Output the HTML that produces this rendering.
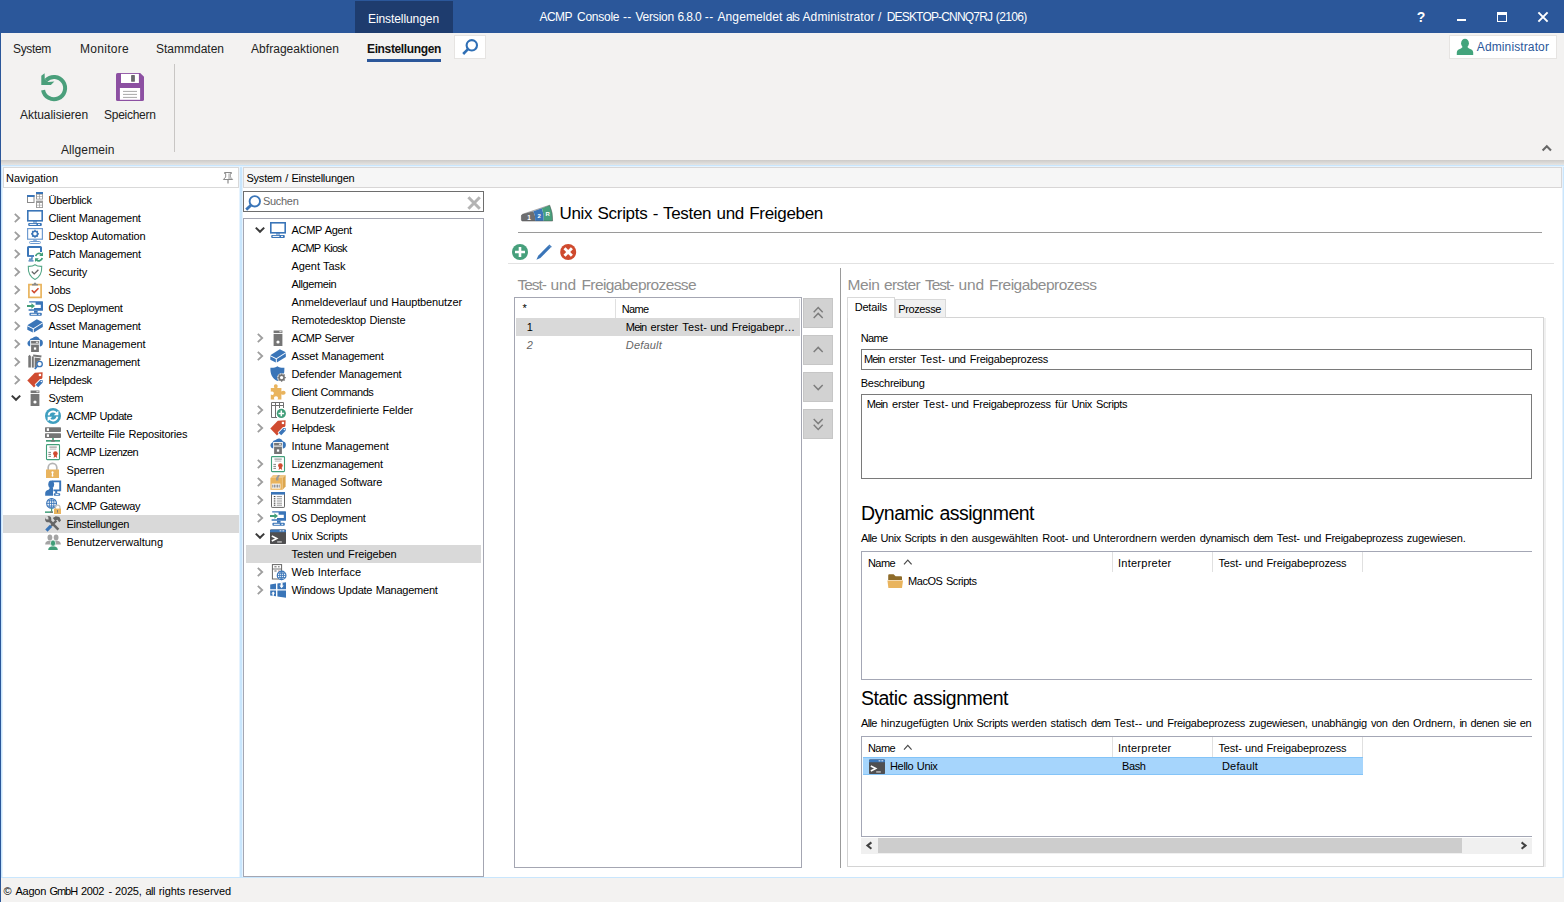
<!DOCTYPE html>
<html><head><meta charset="utf-8"><title>ACMP Console</title>
<style>
html,body{margin:0;padding:0;}
body{width:1564px;height:902px;position:relative;overflow:hidden;background:#fff;font-family:"Liberation Sans", sans-serif;}
.b{position:absolute;}
.t{position:absolute;white-space:pre;}
svg{position:absolute;overflow:visible;}
</style></head><body>
<div class="b" style="left:0px;top:0px;width:1564px;height:33px;background:#2b579a;"></div>
<div class="b" style="left:355px;top:1px;width:98px;height:32px;background:#1e3c6e;"></div>
<div class="b" style="left:0px;top:33px;width:1564px;height:127px;background:#f3f2f1;"></div>
<div class="b" style="left:0px;top:160px;width:1564px;height:5px;background:linear-gradient(#cdcbc9,#e6e5e3);"></div>
<div class="b" style="left:0px;top:165px;width:1564px;height:713px;background:#d4e8fb;"></div>
<div class="b" style="left:0px;top:878px;width:1564px;height:24px;background:#f3f2f1;"></div>
<div class="b" style="left:0px;top:33px;width:1px;height:869px;background:#2b579a;"></div>
<div class="b" style="left:3px;top:167px;width:236px;height:710px;background:#fff;"></div>
<div class="b" style="left:3px;top:167px;width:236px;height:21px;background:#fff;border:1px solid #d9d9d9;box-sizing:border-box;"></div>
<div class="b" style="left:243px;top:167px;width:1319px;height:710px;background:#fff;"></div>
<div class="b" style="left:243px;top:167px;width:1319px;height:21px;background:#f6f6f6;border:1px solid #d8d6d6;box-sizing:border-box;"></div>
<div class="b" style="left:1px;top:165px;width:1563px;height:1px;background:#c9e6fd;"></div>
<div class="b" style="left:1px;top:166px;width:1563px;height:1px;background:#e6f3fe;"></div>
<div class="b" style="left:239px;top:167px;width:1px;height:710px;background:#e6f3fe;"></div>
<div class="b" style="left:242px;top:167px;width:1px;height:710px;background:#e6f3fe;"></div>
<div class="b" style="left:240px;top:167px;width:2px;height:710px;background:#c9e6fd;"></div>
<div class="b" style="left:1562px;top:167px;width:1px;height:710px;background:#e6f1fc;"></div>
<div class="b" style="left:1563px;top:167px;width:1px;height:710px;background:#c9e6fd;"></div>
<div class="b" style="left:1px;top:166px;width:1px;height:711px;background:#c9e6fd;"></div>
<div class="b" style="left:2px;top:166px;width:1px;height:711px;background:#e6f3fe;"></div>
<div class="b" style="left:1px;top:877px;width:1563px;height:1px;background:#c9e6fd;"></div>
<div class="b" style="left:367px;top:59px;width:74px;height:3px;background:#2b579a;"></div>
<div class="b" style="left:454px;top:35px;width:32px;height:24px;background:#fff;border:1px solid #e6e4e2;box-sizing:border-box;"></div>
<div class="b" style="left:1449px;top:35px;width:108px;height:24px;background:#fff;border:1px solid #e6e4e2;box-sizing:border-box;"></div>
<div class="b" style="left:174px;top:64px;width:1px;height:88px;background:#c8c6c4;"></div>
<svg style="left:27px;top:192px" width="16" height="16" viewBox="0 0 16 16"><rect x="0.5" y="3.5" width="6.5" height="7" fill="#fff" stroke="#8a8a8a"/><rect x="0" y="3" width="7.5" height="2" fill="#3a75b8"/>
<rect x="9" y="0" width="7" height="7.5" fill="#9a9a9a"/><rect x="9" y="0" width="7" height="2" fill="#3a75b8"/>
<rect x="10" y="2.6" width="2.2" height="1.8" fill="#fff"/><rect x="12.9" y="2.6" width="2.2" height="1.8" fill="#fff"/><rect x="10" y="5" width="2.2" height="1.7" fill="#fff"/><rect x="12.9" y="5" width="2.2" height="1.7" fill="#fff"/>
<rect x="9" y="8.6" width="7" height="7.4" fill="#9a9a9a"/>
<rect x="10" y="11" width="2.2" height="1.8" fill="#fff"/><rect x="12.9" y="11" width="2.2" height="1.8" fill="#fff"/><rect x="10" y="13.4" width="2.2" height="1.7" fill="#fff"/><rect x="12.9" y="13.4" width="2.2" height="1.7" fill="#fff"/></svg>
<svg style="left:27px;top:210px" width="16" height="16" viewBox="0 0 16 16"><rect x="0.8" y="0.8" width="14.4" height="10" fill="#fff" stroke="#3a75b8" stroke-width="1.6"/>
<rect x="6" y="11.4" width="4" height="1.1" fill="#3a75b8"/>
<rect x="1.2" y="12.9" width="13.6" height="3" rx="1" fill="#3a75b8"/>
<rect x="2.6" y="13.9" width="6.8" height="1" fill="#fff"/><rect x="11" y="13.9" width="2" height="1" fill="#fff"/></svg>
<svg style="left:12.8px;top:213px" width="8" height="10" viewBox="0 0 8 10"><path d="M1.8 0.9 L6.2 5 L1.8 9.1" fill="none" stroke="#9e9e9e" stroke-width="1.8"/></svg>
<svg style="left:27px;top:228px" width="16" height="16" viewBox="0 0 16 16"><rect x="0.6" y="0.6" width="14.8" height="10.6" fill="#fff" stroke="#6f9bd0" stroke-width="1.2"/>
<circle cx="8" cy="5.8" r="2.6" fill="none" stroke="#3a75b8" stroke-width="1.6"/>
<g stroke="#3a75b8" stroke-width="1.3"><path d="M8 1.8v1.3M8 8.5v1.3M4 5.8h1.3M10.7 5.8H12M5.2 3l.9.9M9.9 7.7l.9.9M10.8 3l-.9.9M6.1 7.7l-.9.9"/></g>
<rect x="6.2" y="11.6" width="3.6" height="1.2" fill="#6f9bd0"/>
<rect x="2.6" y="13.5" width="10.8" height="2" rx="0.8" fill="#fff" stroke="#6f9bd0" stroke-width="1"/></svg>
<svg style="left:12.8px;top:231px" width="8" height="10" viewBox="0 0 8 10"><path d="M1.8 0.9 L6.2 5 L1.8 9.1" fill="none" stroke="#9e9e9e" stroke-width="1.8"/></svg>
<svg style="left:27px;top:246px" width="16" height="16" viewBox="0 0 16 16"><path d="M1 10V1.5Q1 1 1.5 1H13.5Q14 1 14 1.5V6" fill="none" stroke="#3a75b8" stroke-width="2"/>
<path d="M0.2 10H7" stroke="#3a75b8" stroke-width="1.8"/>
<path d="M5 10.5V13.2H2M1.5 14.8H6.5" fill="none" stroke="#3a75b8" stroke-width="1.3"/>
<path d="M8.8 10.2A3.3 3.3 0 0 1 14.6 8.6" fill="none" stroke="#419e79" stroke-width="1.7"/>
<path d="M16 6.2V10H12.2Z" fill="#419e79"/>
<path d="M15.2 12A3.3 3.3 0 0 1 9.4 13.6" fill="none" stroke="#419e79" stroke-width="1.7"/>
<path d="M8 16V12.2H11.8Z" fill="#419e79"/></svg>
<svg style="left:12.8px;top:249px" width="8" height="10" viewBox="0 0 8 10"><path d="M1.8 0.9 L6.2 5 L1.8 9.1" fill="none" stroke="#9e9e9e" stroke-width="1.8"/></svg>
<svg style="left:27px;top:264px" width="16" height="16" viewBox="0 0 16 16"><path d="M8 0.7C6 2.2 3.6 2.5 1.3 2.4C1 8 2.6 12.8 8 15.4C13.4 12.8 15 8 14.7 2.4C12.4 2.5 10 2.2 8 0.7Z" fill="#fff" stroke="#56a889" stroke-width="1.1"/>
<path d="M4.8 7.6L7.2 9.9L11.4 5.8" fill="none" stroke="#666" stroke-width="1.4"/></svg>
<svg style="left:12.8px;top:267px" width="8" height="10" viewBox="0 0 8 10"><path d="M1.8 0.9 L6.2 5 L1.8 9.1" fill="none" stroke="#9e9e9e" stroke-width="1.8"/></svg>
<svg style="left:27px;top:282px" width="16" height="16" viewBox="0 0 16 16"><rect x="1.9" y="2.6" width="12.2" height="12.8" fill="#fff" stroke="#e9b45e" stroke-width="1.7"/>
<path d="M5 3.5V1.9H6.4L8 0.2L9.6 1.9H11V3.5Z" fill="#8a8a8a"/>
<path d="M4.8 8.2L7.2 10.6L11.5 6.3" fill="none" stroke="#d04b30" stroke-width="1.6"/></svg>
<svg style="left:12.8px;top:285px" width="8" height="10" viewBox="0 0 8 10"><path d="M1.8 0.9 L6.2 5 L1.8 9.1" fill="none" stroke="#9e9e9e" stroke-width="1.8"/></svg>
<svg style="left:27px;top:300px" width="16" height="16" viewBox="0 0 16 16"><path d="M2.2 1.2H15.4Q16 1.2 16 1.8V10.2Q16 10.8 15.4 10.8H1.6V9.2H7V7.9H13.8V4.8H8.6V2.5H2.2Z" fill="#3a75b8"/>
<rect x="7" y="10.8" width="3.6" height="2" fill="#3a75b8"/>
<rect x="2.4" y="12.8" width="12.4" height="3" rx="1" fill="#3a75b8"/>
<rect x="3.8" y="13.8" width="6" height="1" fill="#fff"/><rect x="11.4" y="13.8" width="1.8" height="1" fill="#fff"/>
<path d="M0 5H4.4V3.2L8 6L4.4 8.8V7H0Z" fill="#419e79"/></svg>
<svg style="left:12.8px;top:303px" width="8" height="10" viewBox="0 0 8 10"><path d="M1.8 0.9 L6.2 5 L1.8 9.1" fill="none" stroke="#9e9e9e" stroke-width="1.8"/></svg>
<svg style="left:27px;top:318px" width="16" height="16" viewBox="0 0 16 16"><path d="M0.3 7.2L9.8 1.2L15.8 4.2L6.3 10.2Z" fill="#3a75b8"/>
<path d="M0.3 8.2L5.8 11V14.6L0.3 11.8Z" fill="#3a75b8"/>
<path d="M6.8 11L15.8 5.3V8.9L6.8 14.6Z" fill="#3a75b8"/></svg>
<svg style="left:12.8px;top:321px" width="8" height="10" viewBox="0 0 8 10"><path d="M1.8 0.9 L6.2 5 L1.8 9.1" fill="none" stroke="#9e9e9e" stroke-width="1.8"/></svg>
<svg style="left:27px;top:336px" width="16" height="16" viewBox="0 0 16 16"><path d="M3 10.4A3 3 0 0 1 2.4 4.6A3.4 3.4 0 0 1 5.6 2A4.2 4.2 0 0 1 12.8 3.2A3.7 3.7 0 0 1 13.2 10.4Z" fill="#3a75b8"/>
<rect x="3.2" y="4" width="9.6" height="7" fill="#fff"/>
<rect x="4.1" y="4.9" width="7.8" height="2.7" fill="#757575"/><rect x="8.9" y="5.7" width="2.2" height="1" fill="#fff"/>
<rect x="4.1" y="8.6" width="7.8" height="7.4" fill="#757575"/><rect x="6.9" y="11.4" width="2.3" height="2.3" fill="#fff"/></svg>
<svg style="left:12.8px;top:339px" width="8" height="10" viewBox="0 0 8 10"><path d="M1.8 0.9 L6.2 5 L1.8 9.1" fill="none" stroke="#9e9e9e" stroke-width="1.8"/></svg>
<svg style="left:27px;top:354px" width="16" height="16" viewBox="0 0 16 16"><path d="M1.3 2.2L2.6 0.8L3.9 2.2V13.6H1.3Z" fill="#757575"/>
<rect x="4.8" y="2.4" width="2" height="11.2" fill="#757575"/>
<path d="M6.2 0.6L14.6 1.6L14.2 3.4L6.2 2.4Z" fill="#757575"/>
<path d="M7.6 3.4L13.6 4.2V6L10.4 7.6L9.4 13.6H7.6Z" fill="#757575"/>
<circle cx="12.6" cy="10" r="2.7" fill="#fff" stroke="#3a75b8" stroke-width="1.3"/>
<path d="M10.6 12L7.8 15" stroke="#3a75b8" stroke-width="1.7"/></svg>
<svg style="left:12.8px;top:357px" width="8" height="10" viewBox="0 0 8 10"><path d="M1.8 0.9 L6.2 5 L1.8 9.1" fill="none" stroke="#9e9e9e" stroke-width="1.8"/></svg>
<svg style="left:27px;top:372px" width="16" height="16" viewBox="0 0 16 16"><path d="M0.3 8.6L7.8 0.8L15.6 0.2L15.4 6L7 15.6Z" fill="#d04b30"/>
<rect x="11.8" y="1.8" width="2.3" height="2.3" fill="#fff"/>
<path d="M7.6 12.4L13 7L16 7.2L16 11.4L11 16Z" fill="#fff"/>
<path d="M8.6 12.8L13.4 8L15.8 8.2L15.6 10.8L11.2 15.2Z" fill="#3a75b8"/>
<circle cx="14.3" cy="9.5" r="0.7" fill="#fff"/></svg>
<svg style="left:12.8px;top:375px" width="8" height="10" viewBox="0 0 8 10"><path d="M1.8 0.9 L6.2 5 L1.8 9.1" fill="none" stroke="#9e9e9e" stroke-width="1.8"/></svg>
<svg style="left:27px;top:390px" width="16" height="16" viewBox="0 0 16 16"><rect x="3.6" y="0.5" width="8.8" height="2.6" fill="#757575"/><rect x="9.4" y="1.3" width="2.2" height="0.9" fill="#fff"/>
<rect x="3.6" y="4" width="8.8" height="12" fill="#757575"/><circle cx="8" cy="12" r="1.6" fill="#fff"/></svg>
<svg style="left:11.2px;top:394.4px" width="10" height="8" viewBox="0 0 10 8"><path d="M0.8 1.6 L5 5.8 L9.2 1.6" fill="none" stroke="#3a3a3a" stroke-width="2"/></svg>
<svg style="left:45px;top:408px" width="16" height="16" viewBox="0 0 16 16"><circle cx="8" cy="8" r="8" fill="#3f9fc0"/>
<path d="M3.6 7.4A4.5 4.5 0 0 1 11.4 5" fill="none" stroke="#fff" stroke-width="1.8"/>
<path d="M13.4 2.6V7.2H8.8Z" fill="#fff"/>
<path d="M12.4 8.6A4.5 4.5 0 0 1 4.6 11" fill="none" stroke="#fff" stroke-width="1.8"/>
<path d="M2.6 13.4V8.8H7.2Z" fill="#fff"/></svg>
<svg style="left:45px;top:426px" width="16" height="16" viewBox="0 0 16 16"><rect x="0" y="1.2" width="16" height="4.8" rx="0.7" fill="#757575"/><rect x="1.8" y="2.3" width="2.2" height="2.6" fill="#fff"/>
<rect x="0" y="7.2" width="16" height="4.8" rx="0.7" fill="#757575"/><rect x="1.8" y="8.3" width="2.2" height="2.6" fill="#fff"/>
<rect x="7.2" y="12" width="1.6" height="2.2" fill="#419e79"/>
<rect x="1" y="14" width="14" height="1.7" fill="#419e79"/><rect x="6.2" y="14" width="3.6" height="1.7" fill="#757575"/></svg>
<svg style="left:45px;top:444px" width="16" height="16" viewBox="0 0 16 16"><rect x="1.5" y="0.6" width="13" height="15" rx="0.8" fill="#fff" stroke="#419e79" stroke-width="1.1"/>
<path d="M4.4 3.1H11.8" stroke="#666" stroke-width="0.8"/><path d="M4.8 5.1H11.4" stroke="#999" stroke-width="0.7"/>
<path d="M3.4 8.4H6M3.4 10.4H6M3.4 12.4H6" stroke="#777" stroke-width="0.9"/>
<circle cx="10.4" cy="9.6" r="2.3" fill="#d04b30"/>
<path d="M9.2 11L8.6 14L10.4 12.8L12.2 14L11.6 11Z" fill="#d04b30"/></svg>
<svg style="left:45px;top:462px" width="16" height="16" viewBox="0 0 16 16"><path d="M3.2 8V5.6A4.3 4.3 0 0 1 11.8 5.6V8" fill="none" stroke="#b4b4b4" stroke-width="1.7"/>
<rect x="1" y="7.5" width="13" height="8.5" fill="#e9b45e"/>
<circle cx="7.5" cy="10.4" r="1.1" fill="#fff"/><rect x="6.9" y="10.4" width="1.2" height="3.4" fill="#fff"/><circle cx="7.5" cy="13.8" r="0.9" fill="#fff"/></svg>
<svg style="left:45px;top:480px" width="16" height="16" viewBox="0 0 16 16"><path d="M7 1.4H15.2V10.4H8.4" fill="none" stroke="#3a75b8" stroke-width="1.9"/>
<rect x="10.2" y="11" width="2" height="2" fill="#3a75b8"/>
<rect x="8.8" y="13.2" width="6.4" height="2.5" rx="0.7" fill="#3a75b8"/><rect x="10.6" y="14" width="3" height="0.9" fill="#fff"/>
<ellipse cx="6.2" cy="4.3" rx="2.9" ry="3.9" fill="#3a75b8"/>
<path d="M0.2 15.7V13.2Q0.2 10.4 3.6 9.8L4.8 8H8V15.7Z" fill="#3a75b8"/></svg>
<svg style="left:45px;top:498px" width="16" height="16" viewBox="0 0 16 16"><circle cx="6.6" cy="5.4" r="4.9" fill="#fff" stroke="#3a75b8" stroke-width="1.1"/>
<path d="M6.6 0.5V10.3M1.7 5.4H11.5M2.6 2.8H10.6M2.6 8H10.6" stroke="#3a75b8" stroke-width="0.9"/>
<ellipse cx="6.6" cy="5.4" rx="2.3" ry="4.9" fill="none" stroke="#3a75b8" stroke-width="0.9"/>
<rect x="6" y="10.4" width="1.2" height="3" fill="#419e79"/>
<rect x="0" y="13.4" width="8" height="1.5" fill="#419e79"/><rect x="5.2" y="13.4" width="2.4" height="1.5" fill="#757575"/>
<path d="M10.4 11V9.4A2.3 2.3 0 0 1 15 9.4V11" fill="none" stroke="#c4c4c4" stroke-width="1.3"/>
<rect x="9" y="10.6" width="7" height="5.4" fill="#e9b45e"/><rect x="12.1" y="12" width="0.9" height="2.6" fill="#777"/></svg>
<div class="b" style="left:3px;top:515px;width:236px;height:18px;background:#d9d9d9;"></div>
<svg style="left:45px;top:516px" width="16" height="16" viewBox="0 0 16 16"><path d="M3 3L13.4 13.6" stroke="#666" stroke-width="2.5"/>
<circle cx="3.2" cy="3.2" r="3.1" fill="#666"/>
<path d="M-0.5 -0.5L3.2 0.6L3.6 3.4L0.8 3.2Z" fill="#d9d9d9"/>
<path d="M11.4 4.6L6 10" stroke="#666" stroke-width="2.3"/>
<path d="M7.8 2L10.8 0.2L14.4 1L16 4.4L14.2 6.2L12.4 3.8L9.8 4.4Z" fill="#666"/>
<path d="M6 9.8L1.4 14.6" stroke="#3a75b8" stroke-width="3.2"/></svg>
<svg style="left:45px;top:534px" width="16" height="16" viewBox="0 0 16 16"><ellipse cx="4.9" cy="3.5" rx="2.4" ry="3" fill="#a4a4a4"/>
<path d="M0.2 10.4Q0.2 7.6 3.4 6.8H6.4Q8 7.2 8 9V10.4Z" fill="#a4a4a4"/>
<ellipse cx="11.1" cy="3.5" rx="2.4" ry="3" fill="#a4a4a4"/>
<path d="M8 10.4V9Q8 7.2 9.6 6.8H12.6Q15.8 7.6 15.8 10.4Z" fill="#a4a4a4"/>
<ellipse cx="8" cy="9.2" rx="2.6" ry="3.2" fill="#419e79" stroke="#fff" stroke-width="0.7"/>
<path d="M3.2 16Q3.2 13.2 6.2 12.4H9.8Q12.8 13.2 12.8 16Z" fill="#419e79"/></svg>
<div class="b" style="left:243px;top:191px;width:241px;height:21px;background:#fff;border:1px solid #6e6e6e;box-sizing:border-box;"></div>
<div class="b" style="left:243px;top:218px;width:241px;height:659px;background:#fff;border:1px solid #a4a6b2;box-sizing:border-box;"></div>
<svg style="left:270px;top:222px" width="16" height="16" viewBox="0 0 16 16"><rect x="0.8" y="0.8" width="14.4" height="10" fill="#fff" stroke="#3a75b8" stroke-width="1.6"/>
<rect x="6" y="11.4" width="4" height="1.1" fill="#3a75b8"/>
<rect x="1.2" y="12.9" width="13.6" height="3" rx="1" fill="#3a75b8"/>
<rect x="2.6" y="13.9" width="6.8" height="1" fill="#fff"/><rect x="11" y="13.9" width="2" height="1" fill="#fff"/></svg>
<svg style="left:254.60000000000002px;top:226px" width="10" height="8" viewBox="0 0 10 8"><path d="M0.8 1.6 L5 5.8 L9.2 1.6" fill="none" stroke="#3a3a3a" stroke-width="2"/></svg>
<svg style="left:270px;top:330px" width="16" height="16" viewBox="0 0 16 16"><rect x="3.6" y="0.5" width="8.8" height="2.6" fill="#757575"/><rect x="9.4" y="1.3" width="2.2" height="0.9" fill="#fff"/>
<rect x="3.6" y="4" width="8.8" height="12" fill="#757575"/><circle cx="8" cy="12" r="1.6" fill="#fff"/></svg>
<svg style="left:256.4px;top:333px" width="8" height="10" viewBox="0 0 8 10"><path d="M1.8 0.9 L6.2 5 L1.8 9.1" fill="none" stroke="#9e9e9e" stroke-width="1.8"/></svg>
<svg style="left:270px;top:348px" width="16" height="16" viewBox="0 0 16 16"><path d="M0.3 7.2L9.8 1.2L15.8 4.2L6.3 10.2Z" fill="#3a75b8"/>
<path d="M0.3 8.2L5.8 11V14.6L0.3 11.8Z" fill="#3a75b8"/>
<path d="M6.8 11L15.8 5.3V8.9L6.8 14.6Z" fill="#3a75b8"/></svg>
<svg style="left:256.4px;top:351px" width="8" height="10" viewBox="0 0 8 10"><path d="M1.8 0.9 L6.2 5 L1.8 9.1" fill="none" stroke="#9e9e9e" stroke-width="1.8"/></svg>
<svg style="left:270px;top:366px" width="16" height="16" viewBox="0 0 16 16"><path d="M7.4 0.2C5.6 1.6 3 2 0.4 1.8C0.2 8 2 12.4 7.4 15C9 14.2 10.4 13.2 11.4 12L14.2 6.4Q14.4 4.2 14.4 1.8C11.8 2 9.2 1.6 7.4 0.2Z" fill="#3a75b8"/>
<circle cx="11.6" cy="11.6" r="4.4" fill="#fff"/>
<circle cx="11.6" cy="11.6" r="2.5" fill="none" stroke="#757575" stroke-width="1.7"/>
<g stroke="#757575" stroke-width="1.4"><path d="M11.6 7.4v1.4M11.6 14.4v1.4M7.4 11.6h1.4M14.4 11.6h1.4M8.6 8.6l1 1M13.6 13.6l1 1M14.6 8.6l-1 1M9.6 13.6l-1 1"/></g></svg>
<svg style="left:270px;top:384px" width="16" height="16" viewBox="0 0 16 16"><path d="M0.8 4H4.4C3.2 1.6 4.2 0.2 5.8 0.2C7.4 0.2 8.4 1.6 7.2 4H11.4V7.4C13.6 6.2 15.6 7 15.6 8.8C15.6 10.6 13.6 11.4 11.4 10.2V15.6H7.6C8.6 13.4 7.6 12.2 6 12.2C4.4 12.2 3.4 13.4 4.4 15.6H0.8V10.6C2.8 11.6 3.8 10.6 3.8 9.2C3.8 7.8 2.8 6.8 0.8 7.8Z" fill="#e9b45e"/></svg>
<svg style="left:270px;top:402px" width="16" height="16" viewBox="0 0 16 16"><path d="M1.5 0.5H13.5V6M1.5 0.5V15.5H7M1.5 3.5H13.5M5.5 0.5V15.5M9.5 0.5V6" fill="none" stroke="#707070" stroke-width="1"/>
<circle cx="11.3" cy="11.4" r="4.6" fill="#419e79"/>
<path d="M11.3 8.6V14.2M8.5 11.4H14.1" stroke="#fff" stroke-width="1.5"/></svg>
<svg style="left:256.4px;top:405px" width="8" height="10" viewBox="0 0 8 10"><path d="M1.8 0.9 L6.2 5 L1.8 9.1" fill="none" stroke="#9e9e9e" stroke-width="1.8"/></svg>
<svg style="left:270px;top:420px" width="16" height="16" viewBox="0 0 16 16"><path d="M0.3 8.6L7.8 0.8L15.6 0.2L15.4 6L7 15.6Z" fill="#d04b30"/>
<rect x="11.8" y="1.8" width="2.3" height="2.3" fill="#fff"/>
<path d="M7.6 12.4L13 7L16 7.2L16 11.4L11 16Z" fill="#fff"/>
<path d="M8.6 12.8L13.4 8L15.8 8.2L15.6 10.8L11.2 15.2Z" fill="#3a75b8"/>
<circle cx="14.3" cy="9.5" r="0.7" fill="#fff"/></svg>
<svg style="left:256.4px;top:423px" width="8" height="10" viewBox="0 0 8 10"><path d="M1.8 0.9 L6.2 5 L1.8 9.1" fill="none" stroke="#9e9e9e" stroke-width="1.8"/></svg>
<svg style="left:270px;top:438px" width="16" height="16" viewBox="0 0 16 16"><path d="M3 10.4A3 3 0 0 1 2.4 4.6A3.4 3.4 0 0 1 5.6 2A4.2 4.2 0 0 1 12.8 3.2A3.7 3.7 0 0 1 13.2 10.4Z" fill="#3a75b8"/>
<rect x="3.2" y="4" width="9.6" height="7" fill="#fff"/>
<rect x="4.1" y="4.9" width="7.8" height="2.7" fill="#757575"/><rect x="8.9" y="5.7" width="2.2" height="1" fill="#fff"/>
<rect x="4.1" y="8.6" width="7.8" height="7.4" fill="#757575"/><rect x="6.9" y="11.4" width="2.3" height="2.3" fill="#fff"/></svg>
<svg style="left:270px;top:456px" width="16" height="16" viewBox="0 0 16 16"><rect x="1.5" y="0.6" width="13" height="15" rx="0.8" fill="#fff" stroke="#419e79" stroke-width="1.1"/>
<path d="M4.4 3.1H11.8" stroke="#666" stroke-width="0.8"/><path d="M4.8 5.1H11.4" stroke="#999" stroke-width="0.7"/>
<path d="M3.4 8.4H6M3.4 10.4H6M3.4 12.4H6" stroke="#777" stroke-width="0.9"/>
<circle cx="10.4" cy="9.6" r="2.3" fill="#d04b30"/>
<path d="M9.2 11L8.6 14L10.4 12.8L12.2 14L11.6 11Z" fill="#d04b30"/></svg>
<svg style="left:256.4px;top:459px" width="8" height="10" viewBox="0 0 8 10"><path d="M1.8 0.9 L6.2 5 L1.8 9.1" fill="none" stroke="#9e9e9e" stroke-width="1.8"/></svg>
<svg style="left:270px;top:474px" width="16" height="16" viewBox="0 0 16 16"><path d="M0.4 4L3 1H15.6L12.6 4Z" fill="#f0c887"/>
<path d="M12.6 4L15.6 1V12.6L12.6 15.8Z" fill="#dca64e"/>
<rect x="0.4" y="4" width="12.2" height="11.8" fill="#e9b45e"/>
<path d="M6 4L8 1H10L8.4 4V6.4H6Z" fill="#9a9a9a"/>
<rect x="1.6" y="9.6" width="8.8" height="5" fill="#fff"/>
<path d="M2.8 10.6V13.6M4.4 10.6V13.6M6 10.6V13.6M7.6 10.6V13.6M9.2 10.6V13.6" stroke="#666" stroke-width="0.8"/></svg>
<svg style="left:256.4px;top:477px" width="8" height="10" viewBox="0 0 8 10"><path d="M1.8 0.9 L6.2 5 L1.8 9.1" fill="none" stroke="#9e9e9e" stroke-width="1.8"/></svg>
<svg style="left:270px;top:492px" width="16" height="16" viewBox="0 0 16 16"><rect x="1.5" y="0.6" width="13" height="14.8" rx="0.6" fill="#fff" stroke="#666" stroke-width="1"/>
<rect x="1" y="0" width="14" height="2.6" fill="#3a75b8"/>
<path d="M3.8 4.6H5.4M3.8 6.8H5.4M3.8 9H5.4M3.8 11.2H5.4M3.8 13.2H5.4" stroke="#333" stroke-width="1"/>
<path d="M6.8 4.6H12M6.8 6.8H12M6.8 9H12M6.8 11.2H12M6.8 13.2H12" stroke="#888" stroke-width="0.9"/></svg>
<svg style="left:256.4px;top:495px" width="8" height="10" viewBox="0 0 8 10"><path d="M1.8 0.9 L6.2 5 L1.8 9.1" fill="none" stroke="#9e9e9e" stroke-width="1.8"/></svg>
<svg style="left:270px;top:510px" width="16" height="16" viewBox="0 0 16 16"><path d="M2.2 1.2H15.4Q16 1.2 16 1.8V10.2Q16 10.8 15.4 10.8H1.6V9.2H7V7.9H13.8V4.8H8.6V2.5H2.2Z" fill="#3a75b8"/>
<rect x="7" y="10.8" width="3.6" height="2" fill="#3a75b8"/>
<rect x="2.4" y="12.8" width="12.4" height="3" rx="1" fill="#3a75b8"/>
<rect x="3.8" y="13.8" width="6" height="1" fill="#fff"/><rect x="11.4" y="13.8" width="1.8" height="1" fill="#fff"/>
<path d="M0 5H4.4V3.2L8 6L4.4 8.8V7H0Z" fill="#419e79"/></svg>
<svg style="left:256.4px;top:513px" width="8" height="10" viewBox="0 0 8 10"><path d="M1.8 0.9 L6.2 5 L1.8 9.1" fill="none" stroke="#9e9e9e" stroke-width="1.8"/></svg>
<svg style="left:270px;top:528px" width="16" height="16" viewBox="0 0 16 16"><rect x="0" y="1.4" width="16" height="14.6" rx="0.7" fill="#4f4f51"/>
<path d="M0 2.9Q0 1.4 1.5 1.4H14.5Q16 1.4 16 2.9V4.2H0Z" fill="#3a75b8"/>
<rect x="9.6" y="2.4" width="1.8" height="0.9" fill="#fff"/><rect x="12.4" y="2.4" width="1.8" height="0.9" fill="#fff"/>
<path d="M1.8 8L6.8 10.5L1.8 13" fill="none" stroke="#fff" stroke-width="1.5"/>
<rect x="7.2" y="13.4" width="4.6" height="1.1" fill="#e0e0e0"/></svg>
<svg style="left:254.60000000000002px;top:532px" width="10" height="8" viewBox="0 0 10 8"><path d="M0.8 1.6 L5 5.8 L9.2 1.6" fill="none" stroke="#3a3a3a" stroke-width="2"/></svg>
<div class="b" style="left:246px;top:545px;width:235px;height:18px;background:#d9d9d9;"></div>
<svg style="left:270px;top:564px" width="16" height="16" viewBox="0 0 16 16"><rect x="2.4" y="0.6" width="9.2" height="14.4" fill="#fff" stroke="#666" stroke-width="1"/>
<path d="M2.4 5H11.6" stroke="#666" stroke-width="0.9"/>
<path d="M4.4 2.8H6.6M8 2.8H9.6M4.4 7H6.6" stroke="#555" stroke-width="0.9"/>
<rect x="8.2" y="6.6" width="1.2" height="0.8" fill="#d04b30"/>
<circle cx="11.6" cy="11.4" r="4.3" fill="#fff" stroke="#3a75b8" stroke-width="1.2"/>
<path d="M11.6 7.2V15.6M7.4 11.4H15.8M8.2 9.2H15M8.2 13.6H15" stroke="#3a75b8" stroke-width="0.9"/>
<ellipse cx="11.6" cy="11.4" rx="2" ry="4.2" fill="none" stroke="#3a75b8" stroke-width="0.9"/></svg>
<svg style="left:256.4px;top:567px" width="8" height="10" viewBox="0 0 8 10"><path d="M1.8 0.9 L6.2 5 L1.8 9.1" fill="none" stroke="#9e9e9e" stroke-width="1.8"/></svg>
<svg style="left:270px;top:582px" width="16" height="16" viewBox="0 0 16 16"><path d="M0.2 2.4L6 1.6V7.2H0.2Z" fill="#3a75b8"/>
<path d="M7.4 1.4L16 0.2V7.2H7.4Z" fill="#3a75b8"/>
<path d="M0.2 8.6H6V14.2L0.2 13.4Z" fill="#3a75b8"/>
<path d="M7.4 8.6H16V15.8L7.4 14.4Z" fill="#3a75b8"/>
<path d="M10.6 1V3.6H9.4L11.6 6.2L13.8 3.6H12.6V0.8Z" fill="#fff"/>
<path d="M3.2 9.4L1.2 11.6H2.4V13.8H4V11.6H5.2Z" fill="#fff"/></svg>
<svg style="left:256.4px;top:585px" width="8" height="10" viewBox="0 0 8 10"><path d="M1.8 0.9 L6.2 5 L1.8 9.1" fill="none" stroke="#9e9e9e" stroke-width="1.8"/></svg>
<div class="b" style="left:518px;top:232px;width:1024px;height:1px;background:#9a9a9a;"></div>
<div class="b" style="left:508px;top:263px;width:1046px;height:1px;background:#e2e2e2;"></div>
<div class="b" style="left:514px;top:297px;width:288px;height:571px;background:#fff;border:1px solid #a4a6b2;box-sizing:border-box;"></div>
<div class="b" style="left:615px;top:299px;width:1px;height:19px;background:#e0e0e0;"></div>
<div class="b" style="left:799px;top:299px;width:1px;height:19px;background:#e0e0e0;"></div>
<div class="b" style="left:516px;top:318px;width:284px;height:18px;background:#d9d9d9;"></div>
<div class="b" style="left:803px;top:298px;width:30px;height:30px;background:#d2d2d2;border:1px solid #c6c6c6;box-sizing:border-box;"></div>
<div class="b" style="left:803px;top:335px;width:30px;height:30px;background:#d2d2d2;border:1px solid #c6c6c6;box-sizing:border-box;"></div>
<div class="b" style="left:803px;top:372px;width:30px;height:30px;background:#d2d2d2;border:1px solid #c6c6c6;box-sizing:border-box;"></div>
<div class="b" style="left:803px;top:409px;width:30px;height:30px;background:#d2d2d2;border:1px solid #c6c6c6;box-sizing:border-box;"></div>
<div class="b" style="left:840px;top:268px;width:1px;height:600px;background:#9a9a9a;"></div>
<div class="b" style="left:847px;top:317px;width:697px;height:550px;background:#fff;border:1px solid #d4d4d4;box-sizing:border-box;"></div>
<div class="b" style="left:1544px;top:318px;width:2px;height:549px;background:#f0f0f0;"></div>
<div class="b" style="left:895px;top:299px;width:51px;height:19px;background:#f0f0f0;border:1px solid #d9d9d9;box-sizing:border-box;"></div>
<div class="b" style="left:847px;top:297px;width:48px;height:21px;background:#fff;border:1px solid #d9d9d9;box-sizing:border-box;border-bottom:none;"></div>
<div class="b" style="left:861px;top:349px;width:671px;height:21px;background:#fff;border:1px solid #7a7a7a;box-sizing:border-box;"></div>
<div class="b" style="left:861px;top:394px;width:671px;height:85px;background:#fff;border:1px solid #7a7a7a;box-sizing:border-box;"></div>
<div class="b" style="left:861px;top:551px;width:671px;height:129px;background:#fff;border:1px solid #a4a7b5;border-right:none;box-sizing:border-box;"></div>
<div class="b" style="left:1112px;top:552px;width:1px;height:20px;background:#e0e0e0;"></div>
<div class="b" style="left:1212px;top:552px;width:1px;height:20px;background:#e0e0e0;"></div>
<div class="b" style="left:1362px;top:552px;width:1px;height:20px;background:#e0e0e0;"></div>
<div class="b" style="left:861px;top:736px;width:671px;height:101px;background:#fff;border:1px solid #a4a7b5;border-right:none;box-sizing:border-box;"></div>
<div class="b" style="left:1112px;top:737px;width:1px;height:20px;background:#e0e0e0;"></div>
<div class="b" style="left:1212px;top:737px;width:1px;height:20px;background:#e0e0e0;"></div>
<div class="b" style="left:1362px;top:737px;width:1px;height:20px;background:#e0e0e0;"></div>
<div class="b" style="left:863px;top:757px;width:500px;height:18px;background:#a6d5fc;border-top:1px solid #84c4f8;border-bottom:1px solid #84c4f8;box-sizing:border-box;"></div>
<div class="b" style="left:861px;top:838px;width:671px;height:16px;background:#f0f0f0;"></div>
<div class="b" style="left:878px;top:838px;width:584px;height:15px;background:#cdcdcd;"></div>
<svg style="left:40.5px;top:72.65px" width="28" height="29" viewBox="0 0 28 29"><path d="M5.02 7.39A11.1 11.1 0 1 1 2.07 17.03" fill="none" stroke="#4a9f7b" stroke-width="4"/><path d="M0.3 2.7L3.6 0.2L3.8 6.2L7.2 9L13.4 8.6L9.9 12.1H0.3Z" fill="#4a9f7b"/></svg>
<svg style="left:116px;top:73px" width="28" height="28" viewBox="0 0 28 28"><path d="M1.6 0H24.2L28 3.8V26.4Q28 28 26.4 28H1.6Q0 28 0 26.4V1.6Q0 0 1.6 0Z" fill="#8c50a2"/><rect x="5" y="0.9" width="17.9" height="9.1" fill="#fff"/><rect x="15.1" y="2" width="3.8" height="6.7" rx="0.4" fill="#6a6a6e"/><rect x="3.9" y="15" width="20.2" height="11.8" fill="#fff"/><path d="M7 18.4H21M7 21.4H21M7 24.4H21" stroke="#a8a8a8" stroke-width="1"/></svg>
<svg style="left:455px;top:36px" width="30" height="22" viewBox="455 36 30 22"><circle cx="471.8" cy="45.3" r="5.2" fill="none" stroke="#2f6fb5" stroke-width="2.1"/><path d="M468 49.2L463.2 54" stroke="#2f6fb5" stroke-width="2.6"/></svg>
<svg style="left:244px;top:192px" width="20" height="19" viewBox="244 192 20 19"><circle cx="254.8" cy="201.3" r="5.2" fill="none" stroke="#3a75b8" stroke-width="1.9"/><path d="M251.2 205L246.2 209.6" stroke="#3a75b8" stroke-width="2.8"/></svg>
<svg style="left:466px;top:195px" width="16" height="16" viewBox="466 195 16 16"><path d="M468.4 197.2L479.8 208.8M479.8 197.2L468.4 208.8" stroke="#b4b4b4" stroke-width="3"/></svg>
<svg style="left:222px;top:171px" width="12" height="14" viewBox="222 171 12 14"><path d="M224.5 172.5H231.5V173.5H230.3V177L232.6 179.5H223.4L225.7 177V173.5H224.5Z" fill="#fff" stroke="#8a8a8a" stroke-width="1"/><path d="M228.2 173.5H230.3V177L232.2 179H228.2Z" fill="#c8c8c8"/><path d="M228 179.5V183.6" stroke="#8a8a8a" stroke-width="1.2"/></svg>
<div class="b" style="left:1457px;top:19px;width:9px;height:2px;background:#fff;"></div>
<div class="b" style="left:1497px;top:12px;width:10px;height:10px;border:1px solid #fff;box-sizing:border-box;border-top-width:3px;"></div>
<svg style="left:1537px;top:11px" width="12" height="12" viewBox="0 0 12 12"><path d="M1.4 1.4L10.6 10.6M10.6 1.4L1.4 10.6" stroke="#fff" stroke-width="2"/></svg>
<svg style="left:1456px;top:38px" width="18" height="18" viewBox="1456 38 18 18"><ellipse cx="1465" cy="43.2" rx="3.9" ry="4.5" fill="#43a47c"/><path d="M1456.8 55V52.4Q1456.8 49.4 1461 48.4L1462.6 47H1467.4L1469 48.4Q1473.2 49.4 1473.2 52.4V55Z" fill="#43a47c"/></svg>
<svg style="left:1541px;top:143px" width="12" height="10" viewBox="0 0 12 10"><path d="M1.6 7.4L5.8 3.2L10 7.4" fill="none" stroke="#686868" stroke-width="2.1"/></svg>
<svg style="left:521px;top:205px" width="32" height="17" viewBox="0 0 32 17"><path d="M0.4 11Q0.4 9.7 1.6 9.3L12.4 6.2Q14.6 10.6 14.2 16H1.6Q0.4 16 0.4 14.8Z" fill="#6d6e70"/><path d="M12.4 6.2L20.9 3.2Q23.4 9.4 22.7 16H14.2Q14.6 10.6 12.4 6.2Z" fill="#3a75b8"/><path d="M20.9 3.2L28.7 0.2Q32 7.6 31.6 16H22.7Q23.4 9.4 20.9 3.2Z" fill="#47a07c"/><path d="M0.4 11Q0.4 9.7 1.6 9.3L28.7 0.2Q32 7.6 31.6 16H1.6Q0.4 16 0.4 14.8Z" fill="none" stroke="#4a4a4a" stroke-width="0.5"/><text x="6.2" y="14.6" font-family="Liberation Sans" font-size="6.5" font-weight="bold" fill="#fff">1</text><text x="16.4" y="13.2" font-family="Liberation Sans" font-size="6" font-weight="bold" fill="#fff">2</text><text x="24.6" y="11.2" font-family="Liberation Sans" font-size="6" font-weight="bold" fill="#fff">R</text></svg>
<svg style="left:512px;top:244px" width="16" height="16" viewBox="0 0 16 16"><circle cx="8" cy="8" r="8" fill="#47a07c"/><path d="M8 3V13M3 8H13" stroke="#fff" stroke-width="2.6"/></svg>
<svg style="left:536px;top:244px" width="17" height="16" viewBox="0 0 17 16"><path d="M0.4 15.8L2.2 11.8L12.6 1.2L14.8 3.4L4.4 14Z" fill="#3a75b8"/><path d="M13.4 0.4L15.8 2.8L15 3.6L12.6 1.2Z" fill="#3a75b8"/></svg>
<svg style="left:560px;top:244px" width="16.4" height="16" viewBox="0 0 16 16"><circle cx="8" cy="8" r="8" fill="#cf4a2e"/><path d="M4.3 4.3L11.7 11.7M11.7 4.3L4.3 11.7" stroke="#fff" stroke-width="2.9"/></svg>
<svg style="left:0;top:0" width="1564" height="902"><path d="M813.7 312.20000000000005L818.2 307.6L822.7 312.20000000000005M813.7 318.0L818.2 313.4L822.7 318.0" fill="none" stroke="#7d7d7d" stroke-width="1.45"/></svg>
<svg style="left:0;top:0" width="1564" height="902"><path d="M813.7 352.0L818.2 347.4L822.7 352.0" fill="none" stroke="#7d7d7d" stroke-width="1.45"/></svg>
<svg style="left:0;top:0" width="1564" height="902"><path d="M813.7 385.0L818.2 389.6L822.7 385.0" fill="none" stroke="#7d7d7d" stroke-width="1.45"/></svg>
<svg style="left:0;top:0" width="1564" height="902"><path d="M813.7 419.0L818.2 423.6L822.7 419.0M813.7 424.79999999999995L818.2 429.4L822.7 424.79999999999995" fill="none" stroke="#7d7d7d" stroke-width="1.45"/></svg>
<svg style="left:0;top:0" width="1564" height="902"><path d="M904 564.4000000000001L907.8 560.2L911.6 564.4000000000001" fill="none" stroke="#4a4a4a" stroke-width="1.2"/></svg>
<svg style="left:0;top:0" width="1564" height="902"><path d="M904 749.6L907.8 745.4L911.6 749.6" fill="none" stroke="#4a4a4a" stroke-width="1.2"/></svg>
<svg style="left:887px;top:574px" width="17" height="15" viewBox="887 574 17 15"><path d="M888.2 575.4Q888.2 574.3 889.2 574.3H893.6L895.6 576.2H901Q902 576.2 902 577.2V580H888.2Z" fill="#8f6c2a"/><path d="M887.4 580.6H903L902 588H888.4Z" fill="#e9b45e"/></svg>
<svg style="left:869px;top:758px" width="16" height="16" viewBox="0 0 16 16"><rect x="0" y="1.4" width="16" height="14.6" rx="0.7" fill="#4f4f51"/>
<path d="M0 2.9Q0 1.4 1.5 1.4H14.5Q16 1.4 16 2.9V4.2H0Z" fill="#3a75b8"/>
<rect x="9.6" y="2.4" width="1.8" height="0.9" fill="#fff"/><rect x="12.4" y="2.4" width="1.8" height="0.9" fill="#fff"/>
<path d="M1.8 8L6.8 10.5L1.8 13" fill="none" stroke="#fff" stroke-width="1.5"/>
<rect x="7.2" y="13.4" width="4.6" height="1.1" fill="#e0e0e0"/></svg>
<svg style="left:0;top:0" width="1564" height="902"><path d="M871.4 842.4L867.4 845.6L871.4 848.8" fill="none" stroke="#404040" stroke-width="2"/><path d="M1521.6 842.4L1525.6 845.6L1521.6 848.8" fill="none" stroke="#404040" stroke-width="2"/></svg>
<span class="t" style="left:368px;top:12px;font-size:12px;line-height:14px;letter-spacing:-0.082px;word-spacing:0.082px;color:#fff;">Einstellungen</span>
<span class="t" style="left:539.5px;top:10px;font-size:12px;line-height:14px;letter-spacing:-0.543px;word-spacing:0.543px;color:#fff;">ACMP</span>
<span class="t" style="left:577px;top:10px;font-size:12px;line-height:14px;letter-spacing:-0.247px;word-spacing:0.247px;color:#fff;">Console</span>
<span class="t" style="left:623px;top:10px;font-size:12px;line-height:14px;letter-spacing:0.250px;word-spacing:-0.250px;color:#fff;">--</span>
<span class="t" style="left:635.5px;top:10px;font-size:12px;line-height:14px;letter-spacing:-0.219px;word-spacing:0.219px;color:#fff;">Version</span>
<span class="t" style="left:677.5px;top:10px;font-size:12px;line-height:14px;letter-spacing:-0.601px;word-spacing:0.601px;color:#fff;">6.8.0</span>
<span class="t" style="left:704.8px;top:10px;font-size:12px;line-height:14px;letter-spacing:0.350px;word-spacing:-0.350px;color:#fff;">--</span>
<span class="t" style="left:717.5px;top:10px;font-size:12px;line-height:14px;letter-spacing:0.095px;word-spacing:-0.095px;color:#fff;">Angemeldet</span>
<span class="t" style="left:786px;top:10px;font-size:12px;line-height:14px;letter-spacing:-0.781px;word-spacing:0.781px;color:#fff;">als</span>
<span class="t" style="left:802.5px;top:10px;font-size:12px;line-height:14px;letter-spacing:0.109px;word-spacing:-0.109px;color:#fff;">Administrator</span>
<span class="t" style="left:878.1px;top:10px;font-size:12px;line-height:14px;letter-spacing:0.256px;word-spacing:-0.256px;color:#fff;">/</span>
<span class="t" style="left:886.7px;top:10px;font-size:12px;line-height:14px;letter-spacing:-0.820px;word-spacing:0.820px;color:#fff;">DESKTOP-CNNQ7RJ</span>
<span class="t" style="left:995.8px;top:10px;font-size:12px;line-height:14px;letter-spacing:-0.631px;word-spacing:0.631px;color:#fff;">(2106)</span>
<span class="t" style="left:13px;top:42px;font-size:12px;line-height:14px;letter-spacing:-0.336px;word-spacing:0.336px;color:#222;">System</span>
<span class="t" style="left:80px;top:42px;font-size:12px;line-height:14px;letter-spacing:0.289px;word-spacing:-0.289px;color:#222;">Monitore</span>
<span class="t" style="left:156px;top:42px;font-size:12px;line-height:14px;letter-spacing:-0.005px;word-spacing:0.005px;color:#222;">Stammdaten</span>
<span class="t" style="left:251px;top:42px;font-size:12px;line-height:14px;letter-spacing:0.040px;word-spacing:-0.040px;color:#222;">Abfrageaktionen</span>
<span class="t" style="left:367px;top:42px;font-size:12px;line-height:14px;letter-spacing:-0.361px;word-spacing:0.361px;color:#111;font-weight:bold;">Einstellungen</span>
<span class="t" style="left:1476.8px;top:40px;font-size:12px;line-height:14px;letter-spacing:0.116px;word-spacing:-0.116px;color:#2b579a;">Administrator</span>
<span class="t" style="left:20px;top:108px;font-size:12px;line-height:14px;letter-spacing:-0.054px;word-spacing:0.054px;color:#222;">Aktualisieren</span>
<span class="t" style="left:104px;top:108px;font-size:12px;line-height:14px;letter-spacing:-0.272px;word-spacing:0.272px;color:#222;">Speichern</span>
<span class="t" style="left:61px;top:143px;font-size:12px;line-height:14px;letter-spacing:0.089px;word-spacing:-0.089px;color:#222;">Allgemein</span>
<span class="t" style="left:6px;top:172px;font-size:11px;line-height:12px;letter-spacing:0.002px;word-spacing:0.383px;color:#000;">Navigation</span>
<span class="t" style="left:246.5px;top:172px;font-size:11px;line-height:12px;letter-spacing:-0.233px;word-spacing:0.618px;color:#000;">System / Einstellungen</span>
<span class="t" style="left:3.5px;top:885px;font-size:11px;line-height:12px;letter-spacing:0.891px;word-spacing:-0.506px;color:#000;">©</span>
<span class="t" style="left:15.5px;top:885px;font-size:11px;line-height:12px;letter-spacing:-0.263px;word-spacing:0.647px;color:#000;">Aagon</span>
<span class="t" style="left:49.5px;top:885px;font-size:11px;line-height:12px;letter-spacing:-1.070px;word-spacing:1.455px;color:#000;">GmbH</span>
<span class="t" style="left:81px;top:885px;font-size:11px;line-height:12px;letter-spacing:-0.371px;word-spacing:0.756px;color:#000;">2002</span>
<span class="t" style="left:108.5px;top:885px;font-size:11px;line-height:12px;letter-spacing:0.328px;word-spacing:0.057px;color:#000;">-</span>
<span class="t" style="left:115px;top:885px;font-size:11px;line-height:12px;letter-spacing:-0.166px;word-spacing:0.551px;color:#000;">2025,</span>
<span class="t" style="left:145.5px;top:885px;font-size:11px;line-height:12px;letter-spacing:-0.505px;word-spacing:0.890px;color:#000;">all</span>
<span class="t" style="left:158.7px;top:885px;font-size:11px;line-height:12px;letter-spacing:-0.051px;word-spacing:0.436px;color:#000;">rights</span>
<span class="t" style="left:188.6px;top:885px;font-size:11px;line-height:12px;letter-spacing:-0.025px;word-spacing:0.410px;color:#000;">reserved</span>
<span class="t" style="left:48.5px;top:194px;font-size:11px;line-height:12px;letter-spacing:-0.284px;word-spacing:0.669px;color:#000;">Überblick</span>
<span class="t" style="left:48.5px;top:212px;font-size:11px;line-height:12px;letter-spacing:-0.223px;word-spacing:0.608px;color:#000;">Client Management</span>
<span class="t" style="left:48.5px;top:230px;font-size:11px;line-height:12px;letter-spacing:-0.108px;word-spacing:0.493px;color:#000;">Desktop Automation</span>
<span class="t" style="left:48.5px;top:248px;font-size:11px;line-height:12px;letter-spacing:-0.238px;word-spacing:0.623px;color:#000;">Patch Management</span>
<span class="t" style="left:48.5px;top:266px;font-size:11px;line-height:12px;letter-spacing:-0.156px;word-spacing:0.541px;color:#000;">Security</span>
<span class="t" style="left:48.5px;top:284px;font-size:11px;line-height:12px;letter-spacing:-0.363px;word-spacing:0.748px;color:#000;">Jobs</span>
<span class="t" style="left:48.5px;top:302px;font-size:11px;line-height:12px;letter-spacing:-0.345px;word-spacing:0.730px;color:#000;">OS Deployment</span>
<span class="t" style="left:48.5px;top:320px;font-size:11px;line-height:12px;letter-spacing:-0.198px;word-spacing:0.583px;color:#000;">Asset Management</span>
<span class="t" style="left:48.5px;top:338px;font-size:11px;line-height:12px;letter-spacing:-0.078px;word-spacing:0.463px;color:#000;">Intune Management</span>
<span class="t" style="left:48.5px;top:356px;font-size:11px;line-height:12px;letter-spacing:-0.301px;word-spacing:0.686px;color:#000;">Lizenzmanagement</span>
<span class="t" style="left:48.5px;top:374px;font-size:11px;line-height:12px;letter-spacing:-0.320px;word-spacing:0.705px;color:#000;">Helpdesk</span>
<span class="t" style="left:48.5px;top:392px;font-size:11px;line-height:12px;letter-spacing:-0.348px;word-spacing:0.733px;color:#000;">System</span>
<span class="t" style="left:66.5px;top:410px;font-size:11px;line-height:12px;letter-spacing:-0.499px;word-spacing:0.884px;color:#000;">ACMP Update</span>
<span class="t" style="left:66.5px;top:428px;font-size:11px;line-height:12px;letter-spacing:-0.188px;word-spacing:0.573px;color:#000;">Verteilte File Repositories</span>
<span class="t" style="left:66.5px;top:446px;font-size:11px;line-height:12px;letter-spacing:-0.621px;word-spacing:1.006px;color:#000;">ACMP Lizenzen</span>
<span class="t" style="left:66.5px;top:464px;font-size:11px;line-height:12px;letter-spacing:-0.206px;word-spacing:0.591px;color:#000;">Sperren</span>
<span class="t" style="left:66.5px;top:482px;font-size:11px;line-height:12px;letter-spacing:-0.116px;word-spacing:0.501px;color:#000;">Mandanten</span>
<span class="t" style="left:66.5px;top:500px;font-size:11px;line-height:12px;letter-spacing:-0.450px;word-spacing:0.835px;color:#000;">ACMP Gateway</span>
<span class="t" style="left:66.5px;top:518px;font-size:11px;line-height:12px;letter-spacing:-0.259px;word-spacing:0.644px;color:#000;">Einstellungen</span>
<span class="t" style="left:66.5px;top:536px;font-size:11px;line-height:12px;letter-spacing:-0.041px;word-spacing:0.426px;color:#000;">Benutzerverwaltung</span>
<span class="t" style="left:263px;top:195px;font-size:11px;line-height:12px;letter-spacing:-0.302px;word-spacing:0.687px;color:#666;">Suchen</span>
<span class="t" style="left:291.6px;top:224px;font-size:11px;line-height:12px;letter-spacing:-0.341px;word-spacing:0.726px;color:#000;">ACMP Agent</span>
<span class="t" style="left:291.6px;top:242px;font-size:11px;line-height:12px;letter-spacing:-0.737px;word-spacing:1.122px;color:#000;">ACMP Kiosk</span>
<span class="t" style="left:291.6px;top:260px;font-size:11px;line-height:12px;letter-spacing:-0.102px;word-spacing:0.487px;color:#000;">Agent Task</span>
<span class="t" style="left:291.6px;top:278px;font-size:11px;line-height:12px;letter-spacing:-0.401px;word-spacing:0.786px;color:#000;">Allgemein</span>
<span class="t" style="left:291.6px;top:296px;font-size:11px;line-height:12px;letter-spacing:-0.114px;word-spacing:0.499px;color:#000;">Anmeldeverlauf und Hauptbenutzer</span>
<span class="t" style="left:291.6px;top:314px;font-size:11px;line-height:12px;letter-spacing:-0.200px;word-spacing:0.585px;color:#000;">Remotedesktop Dienste</span>
<span class="t" style="left:291.6px;top:332px;font-size:11px;line-height:12px;letter-spacing:-0.513px;word-spacing:0.898px;color:#000;">ACMP Server</span>
<span class="t" style="left:291.6px;top:350px;font-size:11px;line-height:12px;letter-spacing:-0.211px;word-spacing:0.596px;color:#000;">Asset Management</span>
<span class="t" style="left:291.6px;top:368px;font-size:11px;line-height:12px;letter-spacing:-0.167px;word-spacing:0.552px;color:#000;">Defender Management</span>
<span class="t" style="left:291.6px;top:386px;font-size:11px;line-height:12px;letter-spacing:-0.429px;word-spacing:0.814px;color:#000;">Client Commands</span>
<span class="t" style="left:291.6px;top:404px;font-size:11px;line-height:12px;letter-spacing:-0.104px;word-spacing:0.489px;color:#000;">Benutzerdefinierte Felder</span>
<span class="t" style="left:291.6px;top:422px;font-size:11px;line-height:12px;letter-spacing:-0.345px;word-spacing:0.730px;color:#000;">Helpdesk</span>
<span class="t" style="left:291.6px;top:440px;font-size:11px;line-height:12px;letter-spacing:-0.072px;word-spacing:0.457px;color:#000;">Intune Management</span>
<span class="t" style="left:291.6px;top:458px;font-size:11px;line-height:12px;letter-spacing:-0.307px;word-spacing:0.692px;color:#000;">Lizenzmanagement</span>
<span class="t" style="left:291.6px;top:476px;font-size:11px;line-height:12px;letter-spacing:-0.135px;word-spacing:0.520px;color:#000;">Managed Software</span>
<span class="t" style="left:291.6px;top:494px;font-size:11px;line-height:12px;letter-spacing:-0.268px;word-spacing:0.653px;color:#000;">Stammdaten</span>
<span class="t" style="left:291.6px;top:512px;font-size:11px;line-height:12px;letter-spacing:-0.353px;word-spacing:0.738px;color:#000;">OS Deployment</span>
<span class="t" style="left:291.6px;top:530px;font-size:11px;line-height:12px;letter-spacing:-0.288px;word-spacing:0.673px;color:#000;">Unix Scripts</span>
<span class="t" style="left:291.6px;top:548px;font-size:11px;line-height:12px;letter-spacing:-0.133px;word-spacing:0.518px;color:#000;">Testen und Freigeben</span>
<span class="t" style="left:291.6px;top:566px;font-size:11px;line-height:12px;letter-spacing:0.086px;word-spacing:0.299px;color:#000;">Web Interface</span>
<span class="t" style="left:291.6px;top:584px;font-size:11px;line-height:12px;letter-spacing:-0.221px;word-spacing:0.606px;color:#000;">Windows Update Management</span>
<span class="t" style="left:559.5px;top:204px;font-size:17px;line-height:19px;letter-spacing:-0.314px;word-spacing:0.909px;color:#000;">Unix Scripts - Testen und Freigeben</span>
<span class="t" style="left:517.5px;top:276px;font-size:15.5px;line-height:17px;letter-spacing:-1.019px;word-spacing:1.019px;color:#8e8e8e;">Test-</span>
<span class="t" style="left:550.5px;top:276px;font-size:15.5px;line-height:17px;letter-spacing:-0.125px;word-spacing:0.125px;color:#8e8e8e;">und</span>
<span class="t" style="left:581.5px;top:276px;font-size:15.5px;line-height:17px;letter-spacing:-0.599px;word-spacing:0.599px;color:#8e8e8e;">Freigabeprozesse</span>
<span class="t" style="left:522.5px;top:302px;font-size:11px;line-height:12px;letter-spacing:-0.132px;word-spacing:0.517px;color:#000;">*</span>
<span class="t" style="left:621.7px;top:303px;font-size:11px;line-height:12px;letter-spacing:-0.636px;word-spacing:1.021px;color:#000;">Name</span>
<span class="t" style="left:526.7px;top:321px;font-size:11px;line-height:12px;letter-spacing:-0.132px;word-spacing:0.517px;color:#000;">1</span>
<span class="t" style="left:625.8px;top:321px;font-size:11px;line-height:12px;letter-spacing:-0.811px;word-spacing:1.196px;color:#000;">Mein</span>
<span class="t" style="left:650.6px;top:321px;font-size:11px;line-height:12px;letter-spacing:-0.121px;word-spacing:0.506px;color:#000;">erster</span>
<span class="t" style="left:682.2px;top:321px;font-size:11px;line-height:12px;letter-spacing:0.251px;word-spacing:0.134px;color:#000;">Test-</span>
<span class="t" style="left:710.3px;top:321px;font-size:11px;line-height:12px;letter-spacing:-0.386px;word-spacing:0.771px;color:#000;">und</span>
<span class="t" style="left:731.7px;top:321px;font-size:11px;line-height:12px;letter-spacing:-0.082px;word-spacing:0.467px;color:#000;">Freigabepr…</span>
<span class="t" style="left:526.7px;top:339px;font-size:11px;line-height:12px;letter-spacing:-0.132px;word-spacing:0.517px;color:#666;font-style:italic;">2</span>
<span class="t" style="left:625.8px;top:339px;font-size:11px;line-height:12px;letter-spacing:0.192px;word-spacing:0.193px;color:#666;font-style:italic;">Default</span>
<span class="t" style="left:847.5px;top:276px;font-size:15.5px;line-height:17px;letter-spacing:-0.402px;word-spacing:0.402px;color:#8e8e8e;">Mein</span>
<span class="t" style="left:884px;top:276px;font-size:15.5px;line-height:17px;letter-spacing:-0.604px;word-spacing:0.604px;color:#8e8e8e;">erster</span>
<span class="t" style="left:925px;top:276px;font-size:15.5px;line-height:17px;letter-spacing:-1.019px;word-spacing:1.019px;color:#8e8e8e;">Test-</span>
<span class="t" style="left:958.5px;top:276px;font-size:15.5px;line-height:17px;letter-spacing:-0.125px;word-spacing:0.125px;color:#8e8e8e;">und</span>
<span class="t" style="left:989px;top:276px;font-size:15.5px;line-height:17px;letter-spacing:-0.530px;word-spacing:0.530px;color:#8e8e8e;">Freigabeprozess</span>
<span class="t" style="left:854.7px;top:301px;font-size:11px;line-height:12px;letter-spacing:-0.189px;word-spacing:0.574px;color:#000;">Details</span>
<span class="t" style="left:898.3px;top:303px;font-size:11px;line-height:12px;letter-spacing:-0.395px;word-spacing:0.780px;color:#000;">Prozesse</span>
<span class="t" style="left:860.8px;top:332px;font-size:11px;line-height:12px;letter-spacing:-0.661px;word-spacing:1.046px;color:#000;">Name</span>
<span class="t" style="left:863.9px;top:353px;font-size:11px;line-height:12px;letter-spacing:-0.811px;word-spacing:1.196px;color:#000;">Mein</span>
<span class="t" style="left:888.7px;top:353px;font-size:11px;line-height:12px;letter-spacing:-0.121px;word-spacing:0.506px;color:#000;">erster</span>
<span class="t" style="left:920.3px;top:353px;font-size:11px;line-height:12px;letter-spacing:0.251px;word-spacing:0.134px;color:#000;">Test-</span>
<span class="t" style="left:948.4px;top:353px;font-size:11px;line-height:12px;letter-spacing:-0.386px;word-spacing:0.771px;color:#000;">und</span>
<span class="t" style="left:969.8px;top:353px;font-size:11px;line-height:12px;letter-spacing:-0.243px;word-spacing:0.628px;color:#000;">Freigabeprozess</span>
<span class="t" style="left:860.8px;top:377px;font-size:11px;line-height:12px;letter-spacing:-0.298px;word-spacing:0.683px;color:#000;">Beschreibung</span>
<span class="t" style="left:866.8px;top:398px;font-size:11px;line-height:12px;letter-spacing:-0.811px;word-spacing:1.196px;color:#000;">Mein</span>
<span class="t" style="left:892px;top:398px;font-size:11px;line-height:12px;letter-spacing:-0.188px;word-spacing:0.573px;color:#000;">erster</span>
<span class="t" style="left:923.3px;top:398px;font-size:11px;line-height:12px;letter-spacing:0.311px;word-spacing:0.074px;color:#000;">Test-</span>
<span class="t" style="left:951.3px;top:398px;font-size:11px;line-height:12px;letter-spacing:-0.386px;word-spacing:0.771px;color:#000;">und</span>
<span class="t" style="left:972.8px;top:398px;font-size:11px;line-height:12px;letter-spacing:-0.269px;word-spacing:0.654px;color:#000;">Freigabeprozess</span>
<span class="t" style="left:1055px;top:398px;font-size:11px;line-height:12px;letter-spacing:-0.081px;word-spacing:0.466px;color:#000;">für</span>
<span class="t" style="left:1071.5px;top:398px;font-size:11px;line-height:12px;letter-spacing:-0.379px;word-spacing:0.764px;color:#000;">Unix</span>
<span class="t" style="left:1095.9px;top:398px;font-size:11px;line-height:12px;letter-spacing:-0.332px;word-spacing:0.717px;color:#000;">Scripts</span>
<span class="t" style="left:861px;top:502px;font-size:19.5px;line-height:22px;letter-spacing:-0.510px;word-spacing:1.192px;color:#000;">Dynamic assignment</span>
<span class="t" style="left:861px;top:532px;font-size:11px;line-height:12px;letter-spacing:-0.686px;word-spacing:1.071px;color:#000;">Alle</span>
<span class="t" style="left:880.5px;top:532px;font-size:11px;line-height:12px;letter-spacing:-0.379px;word-spacing:0.764px;color:#000;">Unix</span>
<span class="t" style="left:904.5px;top:532px;font-size:11px;line-height:12px;letter-spacing:-0.332px;word-spacing:0.717px;color:#000;">Scripts</span>
<span class="t" style="left:940.1px;top:532px;font-size:11px;line-height:12px;letter-spacing:-1.131px;word-spacing:1.516px;color:#000;">in</span>
<span class="t" style="left:950.6px;top:532px;font-size:11px;line-height:12px;letter-spacing:-0.353px;word-spacing:0.738px;color:#000;">den</span>
<span class="t" style="left:971.8px;top:532px;font-size:11px;line-height:12px;letter-spacing:-0.141px;word-spacing:0.526px;color:#000;">ausgewählten</span>
<span class="t" style="left:1042.3px;top:532px;font-size:11px;line-height:12px;letter-spacing:-0.221px;word-spacing:0.606px;color:#000;">Root-</span>
<span class="t" style="left:1072px;top:532px;font-size:11px;line-height:12px;letter-spacing:-0.453px;word-spacing:0.838px;color:#000;">und</span>
<span class="t" style="left:1092.9px;top:532px;font-size:11px;line-height:12px;letter-spacing:-0.077px;word-spacing:0.462px;color:#000;">Unterordnern</span>
<span class="t" style="left:1160.4px;top:532px;font-size:11px;line-height:12px;letter-spacing:-0.146px;word-spacing:0.531px;color:#000;">werden</span>
<span class="t" style="left:1199.8px;top:532px;font-size:11px;line-height:12px;letter-spacing:-0.364px;word-spacing:0.749px;color:#000;">dynamisch</span>
<span class="t" style="left:1253.3px;top:532px;font-size:11px;line-height:12px;letter-spacing:-0.735px;word-spacing:1.120px;color:#000;">dem</span>
<span class="t" style="left:1276.8px;top:532px;font-size:11px;line-height:12px;letter-spacing:-0.149px;word-spacing:0.534px;color:#000;">Test-</span>
<span class="t" style="left:1303.8px;top:532px;font-size:11px;line-height:12px;letter-spacing:-0.386px;word-spacing:0.771px;color:#000;">und</span>
<span class="t" style="left:1325px;top:532px;font-size:11px;line-height:12px;letter-spacing:-0.269px;word-spacing:0.654px;color:#000;">Freigabeprozess</span>
<span class="t" style="left:1406.8px;top:532px;font-size:11px;line-height:12px;letter-spacing:-0.223px;word-spacing:0.608px;color:#000;">zugewiesen.</span>
<span class="t" style="left:868px;top:557px;font-size:11px;line-height:12px;letter-spacing:-0.586px;word-spacing:0.971px;color:#000;">Name</span>
<span class="t" style="left:1118px;top:557px;font-size:11px;line-height:12px;letter-spacing:0.250px;word-spacing:0.135px;color:#000;">Interpreter</span>
<span class="t" style="left:1218.5px;top:557px;font-size:11px;line-height:12px;letter-spacing:-0.131px;word-spacing:0.516px;color:#000;">Test- und Freigabeprozess</span>
<span class="t" style="left:908px;top:575px;font-size:11px;line-height:12px;letter-spacing:-0.437px;word-spacing:0.822px;color:#000;">MacOS Scripts</span>
<span class="t" style="left:861px;top:687px;font-size:19.5px;line-height:22px;letter-spacing:-0.474px;word-spacing:1.157px;color:#000;">Static assignment</span>
<span class="t" style="left:861px;top:717px;font-size:11px;line-height:12px;letter-spacing:-0.686px;word-spacing:1.071px;color:#000;">Alle</span>
<span class="t" style="left:880.8px;top:717px;font-size:11px;line-height:12px;letter-spacing:-0.079px;word-spacing:0.464px;color:#000;">hinzugefügten</span>
<span class="t" style="left:952.8px;top:717px;font-size:11px;line-height:12px;letter-spacing:-0.529px;word-spacing:0.914px;color:#000;">Unix</span>
<span class="t" style="left:976.6px;top:717px;font-size:11px;line-height:12px;letter-spacing:-0.318px;word-spacing:0.703px;color:#000;">Scripts</span>
<span class="t" style="left:1011.5px;top:717px;font-size:11px;line-height:12px;letter-spacing:-0.146px;word-spacing:0.531px;color:#000;">werden</span>
<span class="t" style="left:1050.6px;top:717px;font-size:11px;line-height:12px;letter-spacing:-0.150px;word-spacing:0.535px;color:#000;">statisch</span>
<span class="t" style="left:1091px;top:717px;font-size:11px;line-height:12px;letter-spacing:-0.735px;word-spacing:1.120px;color:#000;">dem</span>
<span class="t" style="left:1114.1px;top:717px;font-size:11px;line-height:12px;letter-spacing:0.133px;word-spacing:0.252px;color:#000;">Test--</span>
<span class="t" style="left:1146.1px;top:717px;font-size:11px;line-height:12px;letter-spacing:-0.486px;word-spacing:0.871px;color:#000;">und</span>
<span class="t" style="left:1167.2px;top:717px;font-size:11px;line-height:12px;letter-spacing:-0.276px;word-spacing:0.661px;color:#000;">Freigabeprozess</span>
<span class="t" style="left:1249.1px;top:717px;font-size:11px;line-height:12px;letter-spacing:-0.232px;word-spacing:0.617px;color:#000;">zugewiesen,</span>
<span class="t" style="left:1311.6px;top:717px;font-size:11px;line-height:12px;letter-spacing:-0.212px;word-spacing:0.597px;color:#000;">unabhängig</span>
<span class="t" style="left:1371px;top:717px;font-size:11px;line-height:12px;letter-spacing:-0.383px;word-spacing:0.768px;color:#000;">von</span>
<span class="t" style="left:1392.1px;top:717px;font-size:11px;line-height:12px;letter-spacing:-0.486px;word-spacing:0.871px;color:#000;">den</span>
<span class="t" style="left:1413px;top:717px;font-size:11px;line-height:12px;letter-spacing:-0.115px;word-spacing:0.500px;color:#000;">Ordnern,</span>
<span class="t" style="left:1459.6px;top:717px;font-size:11px;line-height:12px;letter-spacing:-1.031px;word-spacing:1.416px;color:#000;">in</span>
<span class="t" style="left:1470.5px;top:717px;font-size:11px;line-height:12px;letter-spacing:-0.459px;word-spacing:0.844px;color:#000;">denen</span>
<span class="t" style="left:1503.3px;top:717px;font-size:11px;line-height:12px;letter-spacing:-0.487px;word-spacing:0.872px;color:#000;">sie</span>
<span class="t" style="left:1519.7px;top:717px;font-size:11px;line-height:12px;letter-spacing:-0.325px;word-spacing:0.710px;color:#000;">en</span>
<span class="t" style="left:868px;top:742px;font-size:11px;line-height:12px;letter-spacing:-0.586px;word-spacing:0.971px;color:#000;">Name</span>
<span class="t" style="left:1118px;top:742px;font-size:11px;line-height:12px;letter-spacing:0.250px;word-spacing:0.135px;color:#000;">Interpreter</span>
<span class="t" style="left:1218.5px;top:742px;font-size:11px;line-height:12px;letter-spacing:-0.131px;word-spacing:0.516px;color:#000;">Test- und Freigabeprozess</span>
<span class="t" style="left:890px;top:760px;font-size:11px;line-height:12px;letter-spacing:-0.336px;word-spacing:0.721px;color:#000;">Hello Unix</span>
<span class="t" style="left:1122px;top:760px;font-size:11px;line-height:12px;letter-spacing:-0.395px;word-spacing:0.780px;color:#000;">Bash</span>
<span class="t" style="left:1222px;top:760px;font-size:11px;line-height:12px;letter-spacing:0.163px;word-spacing:0.222px;color:#000;">Default</span>
<span class="t" style="left:1416.8px;top:9px;font-size:14px;line-height:16px;letter-spacing:-1.062px;word-spacing:1.062px;color:#fff;font-weight:bold;">?</span>
</body></html>
